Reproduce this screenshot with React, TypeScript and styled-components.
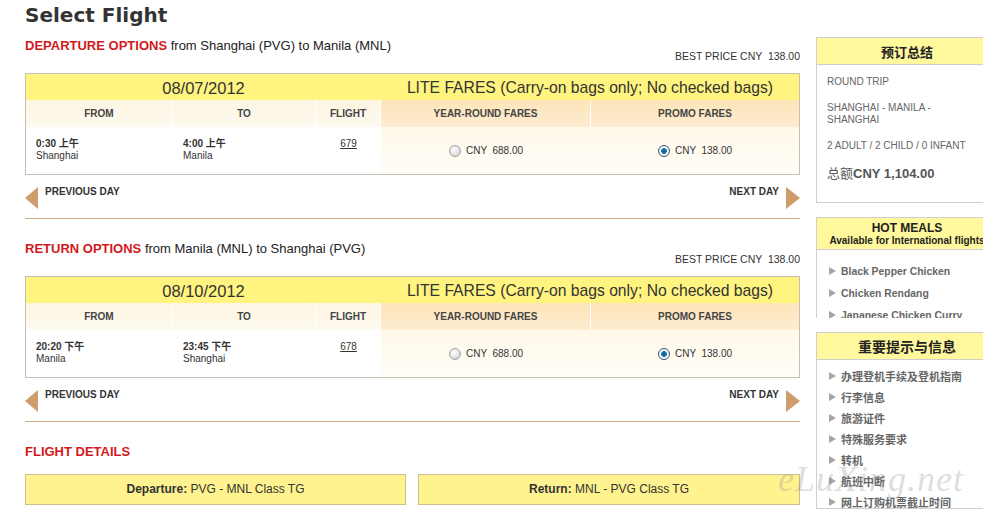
import styled, { createGlobalStyle } from 'styled-components';

const GlobalStyle = createGlobalStyle`
  html, body {
    margin: 0;
    padding: 0;
    overflow: hidden;
    background: #fff;
    font-family: 'Liberation Sans', Arial, 'Noto Sans CJK SC', sans-serif;
    color: #333;
  }
`;

const Page = styled.div`
  display: flex;
  gap: 16px;
  width: max-content;
  padding: 3px 0 0 25px;
  position: relative;
`;

const Main = styled.div`
  width: 775px;
`;

const Title = styled.h1`
  margin: 0;
  font-family: 'DejaVu Sans', sans-serif;
  font-weight: bold;
  font-size: 20px;
  line-height: 24px;
  color: #333;
`;

const Heading = styled.div<{ $top: number }>`
  margin-top: ${(p) => p.$top}px;
  font-size: 13px;
  line-height: 16px;
  color: #222;
  b {
    color: #d31920;
  }
`;

const BestPrice = styled.div`
  margin-top: -4px;
  text-align: right;
  font-size: 10.5px;
  line-height: 12px;
  color: #333;
  white-space: pre;
`;

const FareTable = styled.div`
  margin-top: 11px;
  display: grid;
  grid-template-columns: 147px 143px 65px 210px 1fr;
  border: 1px solid #c6bfb2;
`;

const TopCell = styled.div<{ $span: number; $size: number }>`
  grid-column: span ${(p) => p.$span};
  height: 26px;
  line-height: 28px;
  text-align: center;
  background: #fff47f;
  font-size: ${(p) => p.$size}px;
  color: #333;
  white-space: nowrap;
`;

const HeadCell = styled.div<{ $fare?: boolean; $last?: boolean }>`
  height: 27px;
  line-height: 27px;
  text-align: center;
  font-size: 10px;
  font-weight: bold;
  color: #444;
  border-right: ${(p) => (p.$last ? 'none' : '1px solid #fff')};
  background: ${(p) =>
    p.$fare
      ? 'linear-gradient(#fde5b8, #feecd2)'
      : 'linear-gradient(#fdf5e2, #fefaf0)'};
`;

const DataCell = styled.div<{ $center?: boolean }>`
  height: 47px;
  box-sizing: border-box;
  padding: 11px 0 0 ${(p) => (p.$center ? 0 : 10)}px;
  text-align: ${(p) => (p.$center ? 'center' : 'left')};
  font-size: 10px;
  line-height: 12px;
  color: #333;
  background: #fff;
  strong {
    display: block;
    font-family: 'Liberation Sans', 'Noto Sans CJK SC', sans-serif;
  }
`;

const FlightNo = styled.span`
  text-decoration: underline;
`;

const FareCell = styled.div`
  height: 47px;
  display: flex;
  align-items: center;
  justify-content: center;
  gap: 5px;
  font-size: 10px;
  color: #333;
  white-space: pre;
  background: linear-gradient(#fff9ea, #fffdf7);
`;

const Radio = styled.span<{ $on?: boolean }>`
  width: 10px;
  height: 10px;
  border-radius: 50%;
  border: 1px solid ${(p) => (p.$on ? '#33506e' : '#a2a2a2')};
  background: ${(p) =>
    p.$on
      ? 'radial-gradient(circle, #0f5f8f 0, #1a79ad 2.6px, #fff 3.2px, #e6e6e6 100%)'
      : 'radial-gradient(circle at 40% 35%, #fff 0, #e2e2e2 55%, #c4c4c4 100%)'};
  margin-top: 1px;
`;

const Nav = styled.div`
  display: flex;
  justify-content: space-between;
  padding: 12px 0 9px;
  border-bottom: 1px solid #c9ab85;
`;

const NavLink = styled.div`
  display: flex;
  align-items: flex-start;
  gap: 7px;
  font-size: 10px;
  font-weight: bold;
  line-height: 10px;
  color: #333;
`;

const Arrow = styled.span<{ $dir: 'left' | 'right' }>`
  width: 0;
  height: 0;
  border-top: 11.5px solid transparent;
  border-bottom: 11.5px solid transparent;
  ${(p) =>
    p.$dir === 'left'
      ? 'border-right: 13px solid #cf9d6c;'
      : 'border-left: 14px solid #cf9d6c;'}
`;

const Details = styled.div`
  margin-top: 14px;
  display: grid;
  grid-template-columns: 381px 382px;
  gap: 12px;
`;

const DetailBox = styled.div`
  height: 31px;
  box-sizing: border-box;
  border: 1px solid #cdbf8f;
  background: #fff38f;
  text-align: center;
  line-height: 29px;
  font-size: 12px;
  color: #333;
`;

const Sidebar = styled.div`
  width: 182px;
  padding-top: 34px;
  display: flex;
  flex-direction: column;
  gap: 14px;
`;

const Box = styled.div<{ $height?: number }>`
  border: 1px solid #cfcfcf;
  ${(p) => (p.$height ? `height: ${p.$height}px; overflow: hidden; border-bottom: none;` : '')}
`;

const BoxHead = styled.div<{ $size: number; $h: number }>`
  height: ${(p) => p.$h}px;
  box-sizing: border-box;
  border-bottom: 1px solid #cfcfcf;
  background: #fff89c;
  text-align: center;
  font-weight: bold;
  font-size: ${(p) => p.$size}px;
  color: #222;
  display: flex;
  flex-direction: column;
  justify-content: center;
  white-space: nowrap;
  font-family: 'Liberation Sans', 'Noto Sans CJK SC', sans-serif;
  small {
    font-size: 10px;
    line-height: 12px;
  }
`;

const Summary = styled.div`
  padding: 11px 10px 20px;
  font-size: 10px;
  line-height: 12px;
  color: #666;
  p {
    margin: 0 0 14px;
  }
`;

const Total = styled.div`
  font-size: 13px;
  line-height: 16px;
  color: #555;
  font-family: 'Liberation Sans', 'Noto Sans CJK SC', sans-serif;
  b {
    font-weight: bold;
  }
`;

const List = styled.ul<{ $gap: number; $pad: number }>`
  list-style: none;
  margin: 0;
  padding: ${(p) => p.$pad}px 0 0 12px;
  display: flex;
  flex-direction: column;
  gap: ${(p) => p.$gap}px;
`;

const Item = styled.li<{ $size: number }>`
  display: flex;
  align-items: center;
  gap: 5px;
  height: 12px;
  font-size: ${(p) => p.$size}px;
  font-weight: bold;
  color: #666;
  white-space: nowrap;
  font-family: 'Liberation Sans', 'Noto Sans CJK SC', sans-serif;
  &::before {
    content: '';
    width: 0;
    height: 0;
    border-top: 4.5px solid transparent;
    border-bottom: 4.5px solid transparent;
    border-left: 7px solid #a5a5a5;
  }
`;

const Watermark = styled.div`
  position: absolute;
  left: 778px;
  top: 458px;
  font-family: 'Liberation Serif', serif;
  font-style: italic;
  font-size: 36px;
  letter-spacing: 1px;
  color: rgba(140, 140, 140, 0.3);
  pointer-events: none;
`;

type Leg = {
  label: string;
  route: string;
  date: string;
  dep: [string, string];
  arr: [string, string];
  flight: string;
};

const legs: Leg[] = [
  {
    label: 'DEPARTURE OPTIONS',
    route: 'from Shanghai (PVG) to Manila (MNL)',
    date: '08/07/2012',
    dep: ['0:30 上午', 'Shanghai'],
    arr: ['4:00 上午', 'Manila'],
    flight: '679',
  },
  {
    label: 'RETURN OPTIONS',
    route: 'from Manila (MNL) to Shanghai (PVG)',
    date: '08/10/2012',
    dep: ['20:20 下午', 'Manila'],
    arr: ['23:45 下午', 'Shanghai'],
    flight: '678',
  },
];

const meals = ['Black Pepper Chicken', 'Chicken Rendang', 'Japanese Chicken Curry'];

const notices = [
  '办理登机手续及登机指南',
  '行李信息',
  '旅游证件',
  '特殊服务要求',
  '转机',
  '航班中断',
  '网上订购机票截止时间',
];

function LegSection({ leg, first }: { leg: Leg; first: boolean }) {
  return (
    <>
      <Heading $top={first ? 11 : 22}>
        <b>{leg.label}</b> {leg.route}
      </Heading>
      <BestPrice>BEST PRICE CNY  138.00</BestPrice>
      <FareTable>
        <TopCell $span={3} $size={16.5}>
          {leg.date}
        </TopCell>
        <TopCell $span={2} $size={15.7}>
          LITE FARES (Carry-on bags only; No checked bags)
        </TopCell>
        <HeadCell>FROM</HeadCell>
        <HeadCell>TO</HeadCell>
        <HeadCell>FLIGHT</HeadCell>
        <HeadCell $fare>YEAR-ROUND FARES</HeadCell>
        <HeadCell $fare $last>
          PROMO FARES
        </HeadCell>
        <DataCell>
          <strong>{leg.dep[0]}</strong>
          {leg.dep[1]}
        </DataCell>
        <DataCell>
          <strong>{leg.arr[0]}</strong>
          {leg.arr[1]}
        </DataCell>
        <DataCell $center>
          <FlightNo>{leg.flight}</FlightNo>
        </DataCell>
        <FareCell>
          <Radio />
          CNY  688.00
        </FareCell>
        <FareCell>
          <Radio $on />
          CNY  138.00
        </FareCell>
      </FareTable>
      <Nav>
        <NavLink>
          <Arrow $dir="left" />
          PREVIOUS DAY
        </NavLink>
        <NavLink>
          NEXT DAY
          <Arrow $dir="right" />
        </NavLink>
      </Nav>
    </>
  );
}

export default function App() {
  return (
    <>
      <GlobalStyle />
      <Page>
        <Main>
          <Title>Select Flight</Title>
          {legs.map((leg, i) => (
            <LegSection key={leg.flight} leg={leg} first={i === 0} />
          ))}
          <Heading $top={22}>
            <b>FLIGHT DETAILS</b>
          </Heading>
          <Details>
            <DetailBox>
              <b>Departure:</b> PVG - MNL Class TG
            </DetailBox>
            <DetailBox>
              <b>Return:</b> MNL - PVG Class TG
            </DetailBox>
          </Details>
        </Main>
        <Sidebar>
          <Box>
            <BoxHead $size={13} $h={27}>
              预订总结
            </BoxHead>
            <Summary>
              <p>ROUND TRIP</p>
              <p>
                SHANGHAI - MANILA -<br />
                SHANGHAI
              </p>
              <p>2 ADULT / 2 CHILD / 0 INFANT</p>
              <Total>
                总额<b>CNY 1,104.00</b>
              </Total>
            </Summary>
          </Box>
          <Box $height={100}>
            <BoxHead $size={12} $h={32}>
              HOT MEALS
              <small>Available for International flights</small>
            </BoxHead>
            <List $gap={10} $pad={15}>
              {meals.map((m) => (
                <Item key={m} $size={10.4}>
                  {m}
                </Item>
              ))}
            </List>
          </Box>
          <Box>
            <BoxHead $size={14} $h={27}>
              重要提示与信息
            </BoxHead>
            <List $gap={9} $pad={10}>
              {notices.map((n) => (
                <Item key={n} $size={11}>
                  {n}
                </Item>
              ))}
            </List>
          </Box>
        </Sidebar>
        <Watermark>eLuXing.net</Watermark>
      </Page>
    </>
  );
}
